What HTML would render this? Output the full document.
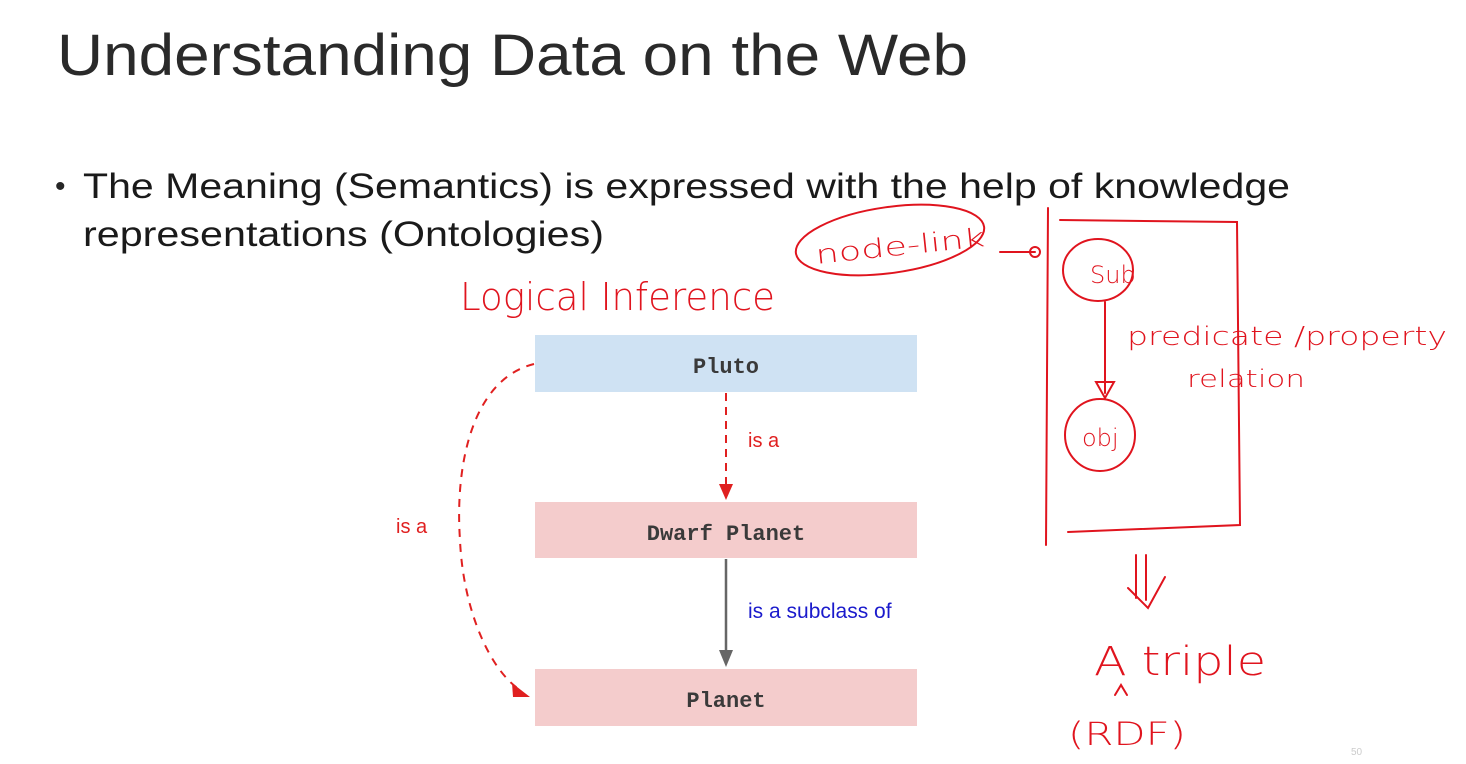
<!DOCTYPE html>
<html><head><meta charset="utf-8"><style>
html,body{margin:0;padding:0;background:#fff;}
body{width:1466px;height:764px;overflow:hidden;position:relative;}
svg{position:absolute;left:0;top:0;}
</style></head><body>
<svg width="1466" height="764" viewBox="0 0 1466 764" xmlns="http://www.w3.org/2000/svg">
<text x="57" y="75" font-family="Liberation Sans, sans-serif" font-size="58" fill="#2a2a2a" textLength="911" lengthAdjust="spacingAndGlyphs">Understanding Data on the Web</text>
<text x="55" y="196" font-family="Liberation Sans, sans-serif" font-size="30" fill="#262626">•</text>
<text x="83" y="198" font-family="Liberation Sans, sans-serif" font-size="35" fill="#1a1a1a" textLength="1207" lengthAdjust="spacingAndGlyphs">The Meaning (Semantics) is expressed with the help of knowledge</text>
<text x="83" y="246" font-family="Liberation Sans, sans-serif" font-size="35" fill="#1a1a1a" textLength="521" lengthAdjust="spacingAndGlyphs">representations (Ontologies)</text>

<rect x="535" y="335" width="382" height="57" fill="#cfe2f3"/>
<rect x="535" y="502" width="382" height="56" fill="#f4cccc"/>
<rect x="535" y="669" width="382" height="57" fill="#f4cccc"/>
<text x="726" y="373" text-anchor="middle" font-family="Liberation Mono, monospace" font-size="22" font-weight="bold" fill="#3a3a3a">Pluto</text>
<text x="726" y="540" text-anchor="middle" font-family="Liberation Mono, monospace" font-size="22" font-weight="bold" fill="#3a3a3a">Dwarf Planet</text>
<text x="726" y="707" text-anchor="middle" font-family="Liberation Mono, monospace" font-size="22" font-weight="bold" fill="#3a3a3a">Planet</text>

<line x1="726" y1="393" x2="726" y2="486" stroke="#e02020" stroke-width="2" stroke-dasharray="8,6"/>
<path d="M719 484 L733 484 L726 500 Z" fill="#e02020"/>
<text x="748" y="447" font-family="Liberation Sans, sans-serif" font-size="20" fill="#e02020">is a</text>
<line x1="726" y1="559" x2="726" y2="652" stroke="#666" stroke-width="2.5"/>
<path d="M719 650 L733 650 L726 667 Z" fill="#666"/>
<text x="748" y="618" font-family="Liberation Sans, sans-serif" font-size="21" fill="#1a1acc">is a subclass of</text>
<path d="M534 364 C470 380 455 470 460 540 C463 610 490 670 520 690" fill="none" stroke="#e02020" stroke-width="2" stroke-dasharray="8,7"/>
<path d="M512 683 L530 697 L513 697 Z" fill="#e02020"/>
<text x="396" y="533" font-family="Liberation Sans, sans-serif" font-size="20" fill="#e02020">is a</text>

<g fill="none" stroke="#e0141e" stroke-width="2" stroke-linecap="round">
<ellipse cx="890" cy="240" rx="95" ry="33" transform="rotate(-8 890 240)"/>
<path d="M1000 252 L1035 252"/><circle cx="1035" cy="252" r="5"/>
<path d="M1048 208 L1046 545"/>
<path d="M1060 220 L1237 222 L1240 525 L1068 532"/>
<ellipse cx="1098" cy="270" rx="35" ry="31"/>
<ellipse cx="1100" cy="435" rx="35" ry="36"/>
<path d="M1105 302 L1105 393"/><path d="M1096 382 L1114 382 L1105 398 Z"/>
<path d="M1136 555 L1136 598 M1146 555 L1146 600 M1128 588 L1148 608 L1165 577"/>
<path d="M1115 695 L1121 685 L1127 695"/>
</g>
<g font-family="DejaVu Sans, sans-serif" fill="#e0141e" font-weight="300">
<text x="460" y="310" font-size="38" textLength="315" lengthAdjust="spacingAndGlyphs">Logical Inference</text>
<text x="815" y="255" font-size="26" textLength="170" lengthAdjust="spacingAndGlyphs" transform="rotate(-6 900 245)">node-link</text>
<text x="1090" y="283" font-size="24">Sub</text>
<text x="1082" y="446" font-size="24">obj</text>
<text x="1127" y="345" font-size="26" textLength="320" lengthAdjust="spacingAndGlyphs">predicate /property</text>
<text x="1187" y="387" font-size="24" textLength="118" lengthAdjust="spacingAndGlyphs">relation</text>
<text x="1094" y="675" font-size="40" textLength="172" lengthAdjust="spacingAndGlyphs">A triple</text>
<text x="1068" y="745" font-size="32" textLength="118" lengthAdjust="spacingAndGlyphs">(RDF)</text>
</g>
<text x="1351" y="755" font-family="Liberation Sans, sans-serif" font-size="10" fill="#ccc">50</text>
</svg>
</body></html>
